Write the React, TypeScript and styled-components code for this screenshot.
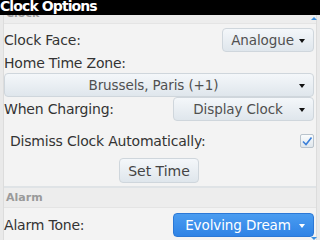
import { ReactNode } from "react";
import { createGlobalStyle, styled } from "styled-components";

const GlobalStyle = createGlobalStyle`
  html, body {
    margin: 0;
    padding: 0;
    width: 320px;
    height: 240px;
    overflow: hidden;
    background: #e6e6e6;
    font-family: "DejaVu Sans", "Liberation Sans", sans-serif;
  }
`;

interface DropdownProps {
  label: string;
  width?: number;
  $wide?: boolean;
  $active?: boolean;
}

function Dropdown({ label, width, $wide, $active }: DropdownProps) {
  return (
    <DropdownStyle $wide={$wide} $active={$active} $width={width}>
      <span className="value">{label}</span>
      <Caret viewBox="0 0 6 4" $active={$active}>
        <path d="M0 0 L6 0 L3 4 Z" />
      </Caret>
    </DropdownStyle>
  );
}

function Row({ children }: { children: ReactNode }) {
  return <RowStyle>{children}</RowStyle>;
}

function App() {
  return (
    <Screen>
      <GlobalStyle />
      <TitleBar>Clock Options</TitleBar>
      <Viewport>
        <Content>
          <Section>
            <SectionHeader>Clock</SectionHeader>
            <Row>
              <Label>Clock Face:</Label>
              <Dropdown label="Analogue" width={92} />
            </Row>
            <Label>Home Time Zone:</Label>
            <Dropdown label="Brussels, Paris (+1)" $wide />
            <Row>
              <Label>When Charging:</Label>
              <Dropdown label="Display Clock" width={141} />
            </Row>
            <CheckRow>
              <Label>Dismiss Clock Automatically:</Label>
              <CheckBox>
                <svg viewBox="0 0 14 14" width="14" height="14">
                  <path
                    d="M3 7.5 L6 10.5 L11.5 3.5"
                    fill="none"
                    stroke="#3b7fd8"
                    strokeWidth="1.6"
                  />
                </svg>
              </CheckBox>
            </CheckRow>
            <ButtonRow>
              <Button>Set Time</Button>
            </ButtonRow>
          </Section>
          <Section>
            <SectionHeader $gap={5}>Alarm</SectionHeader>
            <Row>
              <Label>Alarm Tone:</Label>
              <Dropdown label="Evolving Dream" width={141} $active />
            </Row>
          </Section>
        </Content>
        <ScrollArrow $dir="up" />
        <ScrollArrow $dir="down" />
      </Viewport>
    </Screen>
  );
}

const Screen = styled.div`
  width: 320px;
  height: 240px;
  display: flex;
  flex-direction: column;
  overflow: hidden;
`;

const TitleBar = styled.div`
  height: 15px;
  flex-shrink: 0;
  background: #000;
  color: #fff;
  font-size: 14px;
  font-weight: bold;
  line-height: 13px;
  letter-spacing: -0.9px;
  overflow: hidden;
  white-space: nowrap;
`;

const Viewport = styled.div`
  position: relative;
  flex-grow: 1;
  overflow: hidden;
  background: #e9e9e9;
`;

const Content = styled.div`
  margin: -11px 3px 0 3px;
  display: flex;
  flex-direction: column;
  background: #f3f3f3;
  border-left: 1px solid #dcdcdc;
  border-right: 1px solid #dcdcdc;
`;

const Section = styled.div`
  display: flex;
  flex-direction: column;
  padding: 0 2px 3px 0;
  & + & {
    border-top: 2px solid #dfe3e6;
  }
`;

const SectionHeader = styled.div<{ $gap?: number }>`
  height: 19px;
  line-height: 19px;
  padding-left: 2px;
  margin: 0 -2px ${({ $gap }) => $gap ?? 4}px 0;
  background: #ededed;
  color: #9a9a9a;
  font-size: 11px;
  font-weight: bold;
  border-bottom: 1px solid #e4e4e4;
`;

const RowStyle = styled.div`
  display: flex;
  align-items: center;
  justify-content: space-between;
  height: 24px;
  margin: 0 0 1px;
  & + & {
    margin-top: 3px;
  }
`;

const CheckRow = styled(RowStyle)`
  padding-left: 6px;
  && {
    margin: 8px 0 6px;
  }
  height: 22px;
`;

const Label = styled.div`
  color: #333;
  font-size: 14px;
  line-height: 20px;
  letter-spacing: -0.2px;
  white-space: nowrap;
`;

interface DropdownStyleProps {
  $wide?: boolean;
  $active?: boolean;
  $width?: number;
}

const DropdownStyle = styled.div<DropdownStyleProps>`
  display: flex;
  align-items: center;
  justify-content: center;
  position: relative;
  height: 24px;
  box-sizing: border-box;
  padding: 0 21px 0 10px;
  border-radius: 4px;
  border: 1px solid ${({ $active }) => ($active ? "#2b78d6" : "#cfd6dc")};
  background: ${({ $active }) =>
    $active
      ? "linear-gradient(#4a9cf0, #2f83e6)"
      : "linear-gradient(#f4f7fa, #dfe6ec)"};
  color: ${({ $active }) => ($active ? "#fff" : "#505050")};
  font-size: 13.5px;
  letter-spacing: -0.1px;
  white-space: nowrap;
  width: ${({ $width }) => ($width ? `${$width}px` : "auto")};
`;

const Caret = styled.svg<{ $active?: boolean }>`
  position: absolute;
  right: 8px;
  top: 10px;
  width: 6px;
  height: 4px;
  fill: ${({ $active }) => ($active ? "#fff" : "#111")};
`;

const CheckBox = styled.div`
  width: 14px;
  height: 14px;
  box-sizing: border-box;
  border: 1px solid #b9c3cc;
  border-radius: 2px;
  background: linear-gradient(#fafcfd, #dfe6ec);
  display: flex;
  svg {
    margin: -1px;
  }
`;

const ButtonRow = styled.div`
  display: flex;
  justify-content: center;
`;

const Button = styled.div`
  width: 80px;
  height: 25px;
  box-sizing: border-box;
  border: 1px solid #cfd6dc;
  border-radius: 4px;
  background: linear-gradient(#f4f7fa, #dfe6ec);
  color: #444;
  font-size: 14px;
  display: flex;
  align-items: center;
  justify-content: center;
`;

const ScrollArrow = styled.div<{ $dir: "up" | "down" }>`
  position: absolute;
  right: 3px;
  width: 0;
  height: 0;
  border-left: 3px solid transparent;
  border-right: 3px solid transparent;
  ${({ $dir }) =>
    $dir === "up"
      ? "top: 2px; border-bottom: 3px solid #3b8fe0;"
      : "bottom: 0; border-top: 3px solid #3b8fe0;"}
`;

export default App;
